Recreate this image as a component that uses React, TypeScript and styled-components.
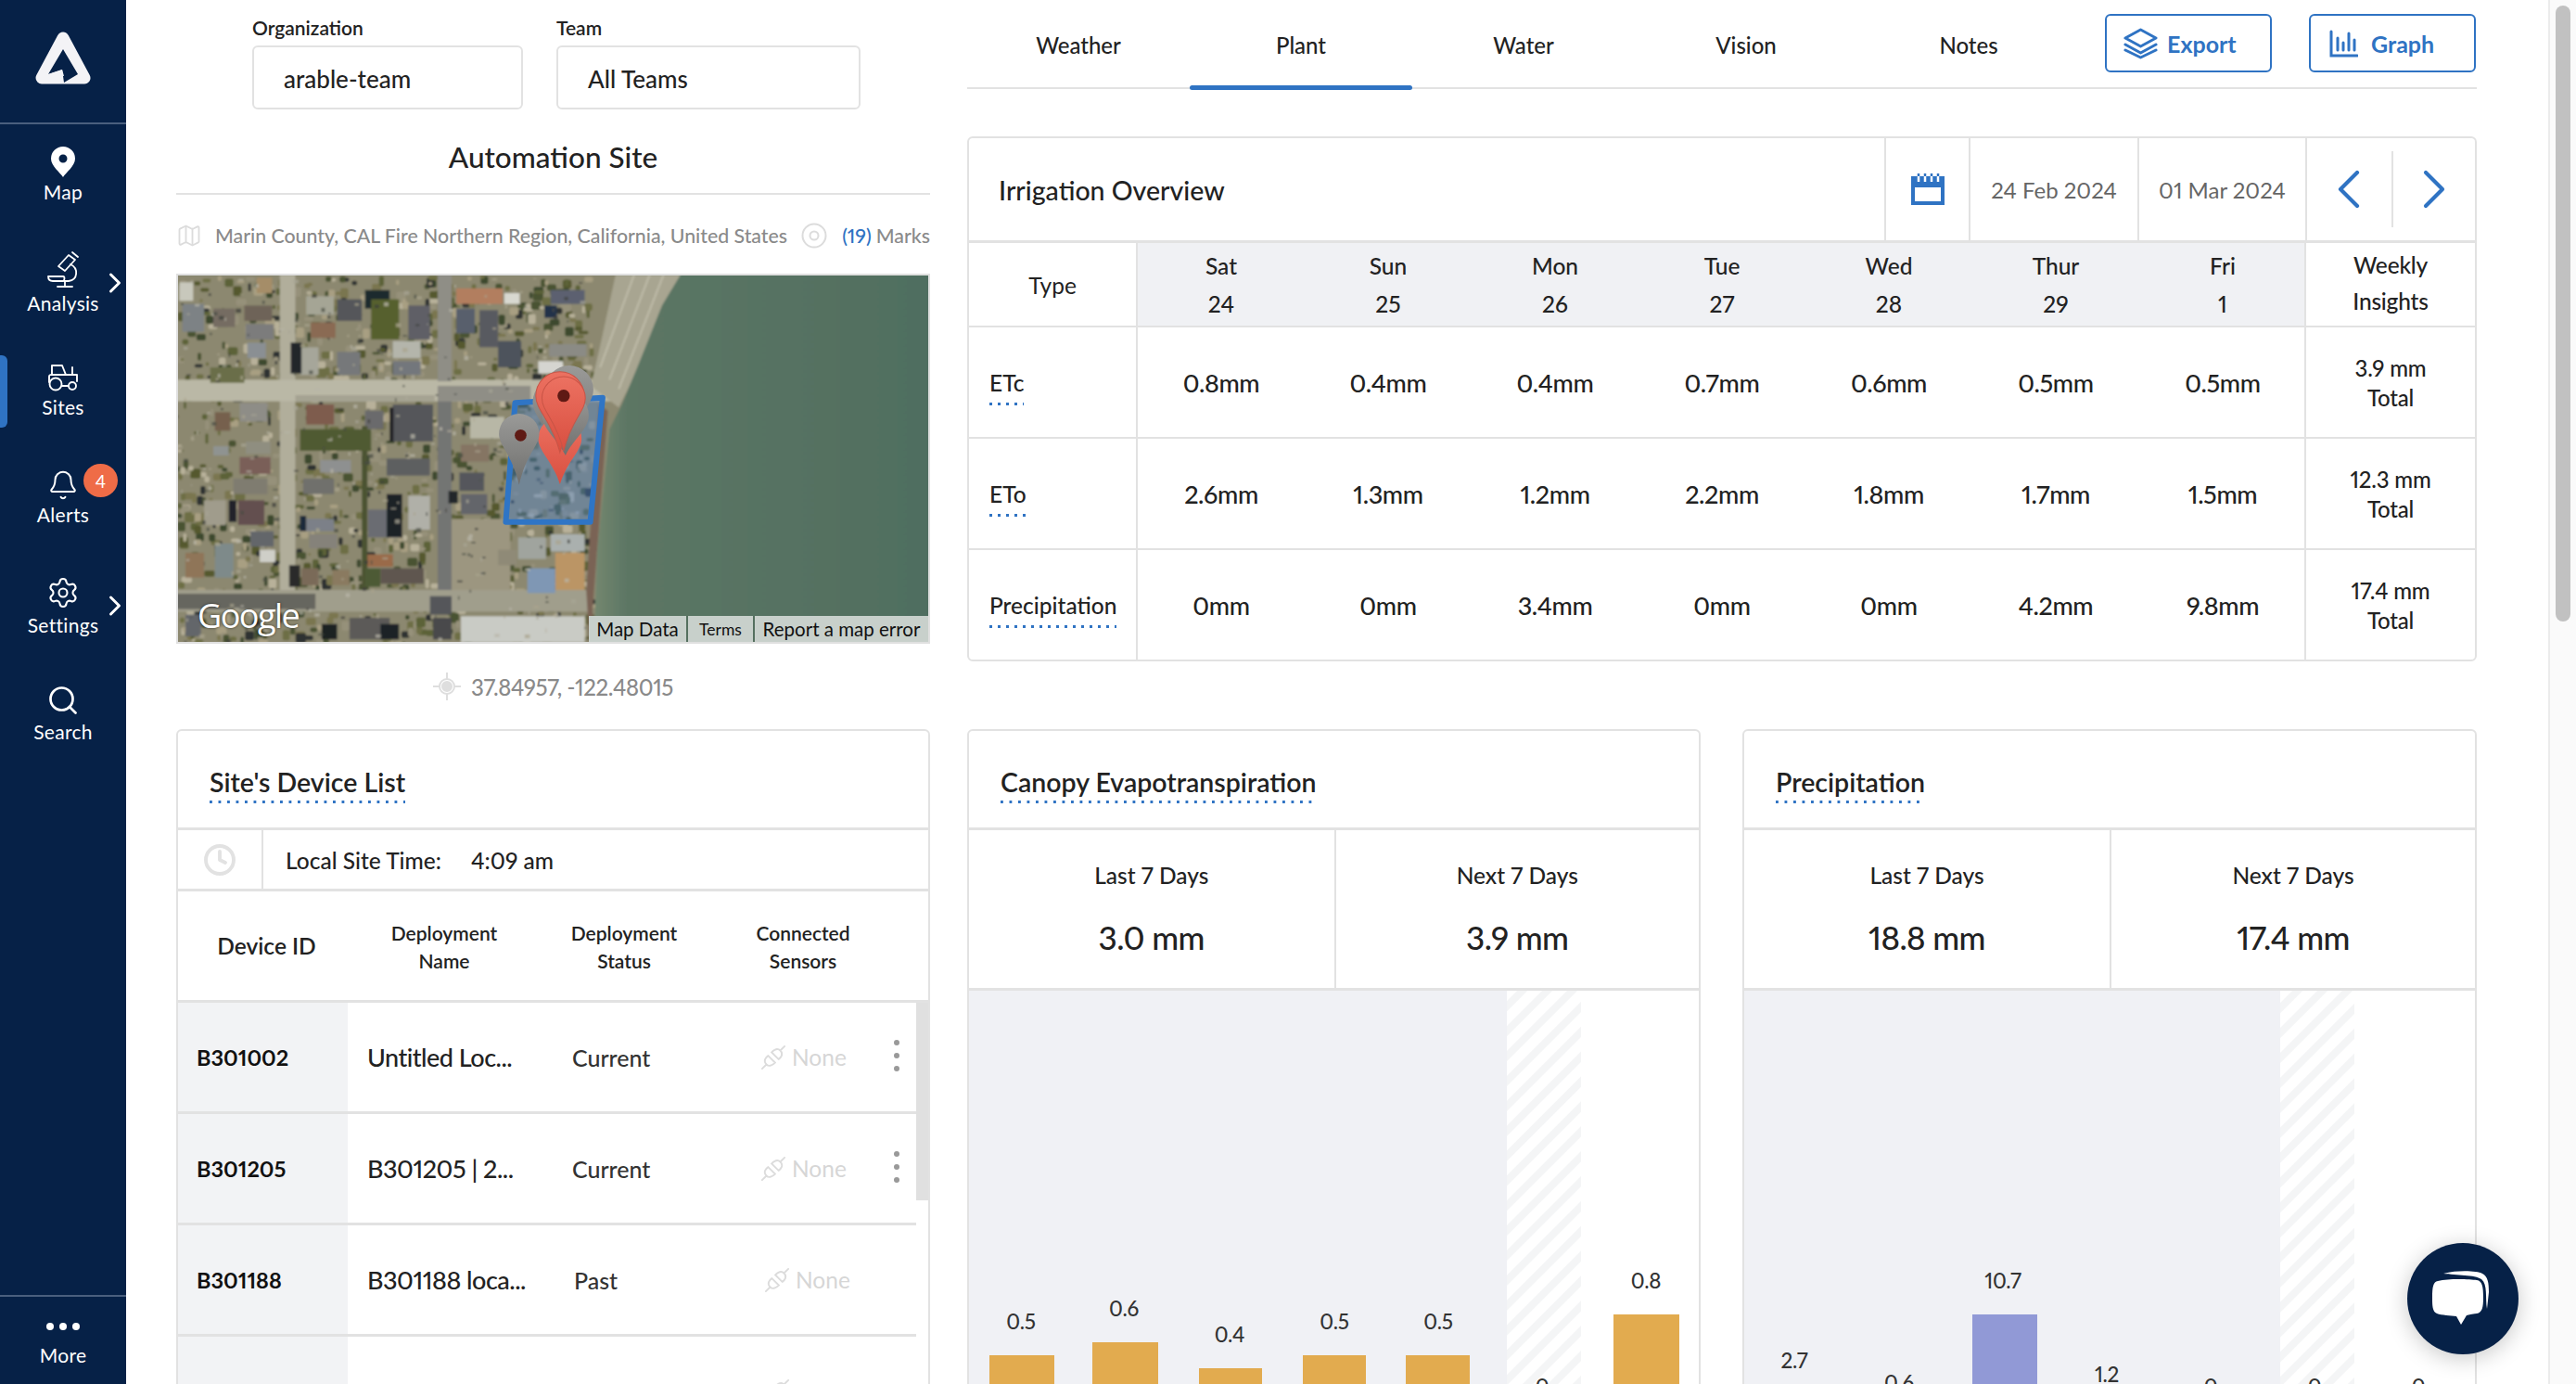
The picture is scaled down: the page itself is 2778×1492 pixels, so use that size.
import React from "react";
import styled, { createGlobalStyle } from "styled-components";
import { Bell, Settings, Search, Clock, ChevronRight, ChevronLeft, Map as MapIcon } from "lucide-react";

const BLUE = "#2f73c3";
const NAVY = "#062147";
const LINE = "#e2e2e2";

const Global = createGlobalStyle`
  html, body { margin: 0; padding: 0; width: 2778px; height: 1492px; overflow: hidden; background: #fff; }
  body, button { font-family: Lato, "Open Sans", sans-serif; color: #222; font-variant-numeric: proportional-nums; }
  * { box-sizing: border-box; }
`;

const Page = styled.div`
  position: relative; display: flex; width: 2778px; height: 1492px; overflow: hidden; background: #fff;
`;

/* ---------- sidebar ---------- */
const Side = styled.aside`
  width: 136px; flex: none; height: 100%; background: ${NAVY}; color: #fff; display: flex; flex-direction: column;
`;
const LogoBox = styled.div`
  height: 134px; flex: none; display: flex; align-items: center; justify-content: center;
  border-bottom: 2px solid #4a5f7e; padding-bottom: 6px;
`;
const NavList = styled.nav`
  flex: 1; padding-top: 22px; display: flex; flex-direction: column;
`;
const NavItem = styled.div<{ $active?: boolean }>`
  position: relative; height: 116px; flex: none; display: flex; flex-direction: column; align-items: center;
  ${(p) => p.$active && `&::before { content: ""; position: absolute; left: 0; top: -5px; width: 8px; height: 78px; background: ${BLUE}; border-radius: 0 6px 6px 0; }`}
`;
const NavIcon = styled.div<{ $gap?: number }>`
  height: 38px; display: flex; align-items: center; justify-content: center; margin-bottom: ${(p) => p.$gap ?? 2}px;
`;
const NavLabel = styled.div`
  font-size: 21px; line-height: 24px; color: #fff; letter-spacing: .3px;
`;
const NavChevron = styled.div`
  position: absolute; right: -6px; top: 15px; display: flex;
`;
const Badge = styled.div`
  position: absolute; left: 90px; top: -4px; width: 37px; height: 36px; border-radius: 50%; background: #ef6c47;
  color: #fff; font-size: 19px; display: flex; align-items: center; justify-content: center;
`;
const MoreBox = styled.div`
  height: 96px; flex: none; border-top: 2px solid #4a5f7e; display: flex; flex-direction: column; align-items: center; padding-top: 28px; gap: 15px;
`;
const Dots = styled.div`
  display: flex; gap: 6px;
`;
const Dot = styled.span`
  width: 8px; height: 8px; border-radius: 50%; background: #fff;
`;

/* ---------- main ---------- */
const Main = styled.main`
  flex: 1; padding-left: 54px; display: grid; grid-template-columns: 813px 1628px; column-gap: 40px; grid-template-rows: 786px 1fr; overflow: hidden; min-width: 0;
`;
const Track = styled.div`
  width: 30px; flex: none; background: #fafafa; border-left: 2px solid #ececec; padding: 6px 6px 0 6px;
`;
const Thumb = styled.div`
  width: 16px; height: 664px; background: #c1c1c1; border-radius: 8px;
`;

/* ---------- left top ---------- */
const TopLeft = styled.section`
  display: flex; flex-direction: column;
`;
const Filters = styled.div`
  height: 118px; padding: 20px 0 0 82px; display: flex; gap: 36px;
`;
const Filter = styled.div<{ $w: number }>`
  width: ${(p) => p.$w}px; display: flex; flex-direction: column;
`;
const FilterLabel = styled.label`
  font-size: 21px; font-weight: 600; line-height: 20px; height: 29px; color: #222;
`;
const FilterBox = styled.div`
  height: 70px; border: 2px solid ${LINE}; border-radius: 6px; padding: 4px 0 0 32px; display: flex; align-items: center; font-size: 26px; font-weight: 500; color: #222;
`;
const SiteTitle = styled.h1`
  margin: 0; height: 92px; border-bottom: 2px solid ${LINE}; font-size: 31.5px; font-weight: 500; display: flex; align-items: center; justify-content: center; padding-top: 12px; color: #222;
`;
const Address = styled.div`
  height: 85px; display: flex; align-items: center; font-size: 21.3px; color: #8a8a8a; font-weight: 500; white-space: nowrap; padding-top: 2px;
`;
const AddressText = styled.span`
  margin-left: 14px; flex: 1;
`;
const MarkBlue = styled.span`
  color: ${BLUE}; margin: 0 5px 0 16px;
`;
const MapFrame = styled.div`
  position: relative; height: 399px; border: 2px solid #e0e0e0; overflow: hidden; background: #55705f;
`;
const MapSvg = styled.svg`
  display: block; width: 100%; height: 100%;
`;
const GoogleMark = styled.div`
  position: absolute; left: 21px; bottom: 6px; font-family: "Open Sans", sans-serif; font-size: 36px; line-height: 44px; color: #fff; letter-spacing: -1.5px; text-shadow: 0 0 3px rgba(0,0,0,.6);
`;
const Attribution = styled.div`
  position: absolute; right: 0; bottom: 0; height: 28px; display: flex; gap: 2px; background: #55705f;
`;
const AttrItem = styled.div<{ $w: number; $small?: boolean }>`
  width: ${(p) => p.$w}px; background: #c8d0cb; color: #111; font-size: ${(p) => (p.$small ? 17.5 : 20.5)}px; display: flex; align-items: center; justify-content: center; white-space: nowrap;
`;
const Coords = styled.div`
  height: 92px; display: flex; align-items: center; justify-content: center; gap: 11px; font-size: 24px; font-weight: 500; color: #8a8a8a; letter-spacing: -.4px;
`;

/* ---------- right top ---------- */
const TopRight = styled.section`
  display: flex; flex-direction: column;
`;
const TabBar = styled.div`
  height: 96px; border-bottom: 2px solid ${LINE}; display: flex; align-items: flex-start;
`;
const Tab = styled.div<{ $active?: boolean }>`
  position: relative; width: 240px; height: 94px; display: flex; align-items: center; justify-content: center; font-size: 24px; color: #222; font-weight: 500; padding-top: 2px;
  ${(p) => p.$active && `&::after { content: ""; position: absolute; left: 0; right: 0; bottom: -3px; height: 5px; background: ${BLUE}; border-radius: 3px; }`}
`;
const BarButton = styled.button<{ $ml: number; $pl: number; $gap: number }>`
  margin: 15px 0 0 ${(p) => p.$ml}px; width: 180px; height: 63px; border: 2px solid ${BLUE}; border-radius: 6px; background: #fff; color: ${BLUE}; font-size: 25px; font-weight: 700; display: flex; align-items: center; gap: ${(p) => p.$gap}px; padding: 0 0 0 ${(p) => p.$pl}px;
`;
const Card = styled.div`
  border: 2px solid ${LINE}; border-radius: 6px 6px 0 0; background: #fff; overflow: hidden;
`;
const IrrigationCard = styled(Card)`
  margin-top: 51px; height: 566px; border-radius: 6px;
`;
const IrrHead = styled.div`
  height: 113px; display: flex; align-items: stretch; border-bottom: 3px solid ${LINE};
`;
const IrrTitle = styled.div`
  flex: 1; padding: 2px 0 0 32px; display: flex; align-items: center; font-size: 28.5px; font-weight: 500; color: #222;
`;
const HeadCell = styled.div<{ $w: number }>`
  position: relative; width: ${(p) => p.$w}px; border-left: 2px solid ${LINE}; display: flex; align-items: center; justify-content: center; font-size: 24px; color: #666;
`;
const NavPair = styled.div`
  width: 183px; border-left: 2px solid ${LINE}; display: grid; grid-template-columns: 1fr 1fr; align-items: center;
`;
const NavBtn = styled.div<{ $sep?: boolean }>`
  height: 82px; display: flex; align-items: center; justify-content: center; overflow: visible; ${(p) => p.$sep && `border-left: 2px solid ${LINE};`}
`;
const IrrGrid = styled.div`
  display: grid; grid-template-columns: 182px repeat(7, 180px) 182px; grid-auto-rows: auto;
`;
const TypeCell = styled.div<{ $h: number }>`
  height: ${(p) => p.$h}px; border-right: 2px solid ${LINE}; border-bottom: 2px solid ${LINE}; display: flex; align-items: center; font-size: 24.5px; color: #222; padding-left: 22px;
`;
const TypeHead = styled(TypeCell)`
  justify-content: center; padding: 2px 0 0 0;
`;
const DottedLabel = styled.span`
  padding-bottom: 12px; line-height: 24px; font-weight: 500; margin-top: 13px; background: linear-gradient(to right, ${BLUE} 3px, transparent 3px) left bottom / 9px 3px repeat-x;
`;
const DayHead = styled.div`
  height: 91px; background: #f0f1f4; border-bottom: 2px solid ${LINE}; display: flex; flex-direction: column; align-items: center; justify-content: center; font-size: 24.5px; line-height: 41px; color: #222; font-weight: 500; padding-top: 1px;
`;
const Value = styled.div<{ $h: number }>`
  height: ${(p) => p.$h}px; border-bottom: 2px solid ${LINE}; display: flex; align-items: center; justify-content: center; font-size: 27px; font-weight: 500; color: #222; letter-spacing: -.4px; padding-top: 1px;
`;
const Insight = styled.div<{ $h: number; $head?: boolean }>`
  height: ${(p) => p.$h}px; border-left: 2px solid ${LINE}; border-bottom: 2px solid ${LINE}; margin-left: -2px; display: flex; flex-direction: column; align-items: center; justify-content: center; font-size: ${(p) => (p.$head ? 24.5 : 24)}px; line-height: ${(p) => (p.$head ? 39 : 32)}px; font-weight: 500; color: #222; letter-spacing: -.2px; ${(p) => (p.$head ? "padding-bottom: 4px;" : "padding-top: 2px;")}
`;

/* ---------- device card ---------- */
const DeviceCard = styled(Card)`
  height: 720px;
`;
const CardTitleBar = styled.div<{ $pl: number }>`
  height: 107px; border-bottom: 3px solid ${LINE}; padding: 38px 0 0 ${(p) => p.$pl}px; display: flex; align-items: flex-start;
`;
const CardTitle = styled.h2`
  margin: 0; font-size: 28.5px; line-height: 34px; font-weight: 600; color: #222; padding-bottom: 6px; background: linear-gradient(to right, ${BLUE} 3px, transparent 3px) left bottom / 9.5px 3px repeat-x;
`;
const TimeRow = styled.div`
  height: 66px; border-bottom: 3px solid ${LINE}; display: flex; align-items: stretch;
`;
const TimeIcon = styled.div`
  width: 92px; border-right: 2px solid ${LINE}; display: flex; align-items: center; justify-content: center;
`;
const TimeText = styled.div`
  padding: 2px 0 0 24px; display: flex; align-items: center; gap: 32px; font-size: 24.5px; color: #222; font-weight: 500;
`;
const DeviceHead = styled.div`
  height: 120px; border-bottom: 3px solid ${LINE}; display: grid; grid-template-columns: 183px 208px 180px 206px 1fr; align-items: center; text-align: center; padding-top: 2px;
`;
const DevHeadId = styled.div`
  font-size: 24.5px; font-weight: 600; color: #222; margin-bottom: 2px; padding-left: 8px;
`;
const DevHeadCol = styled.div`
  font-size: 21px; line-height: 29.5px; font-weight: 600; color: #222;
`;
const RowsWrap = styled.div`
  position: relative;
`;
const RowScroll = styled.div`
  position: absolute; right: 0; top: 0; width: 13px; height: 213px; background: #e0e0e0;
`;
const DevRow = styled.div`
  height: 120px; margin-right: 13px; border-bottom: 3px solid ${LINE}; display: flex; align-items: stretch;
`;
const DevId = styled.div`
  width: 183px; background: #f2f3f5; display: flex; align-items: center; padding-left: 20px; font-size: 23.5px; font-weight: 700; color: #111;
`;
const DevName = styled.div`
  width: 222px; padding-left: 21px; display: flex; align-items: center; font-size: 27px; font-weight: 500; color: #222; letter-spacing: -.5px; white-space: nowrap;
`;
const DevStatus = styled.div<{ $pl: number }>`
  width: 198px; padding-left: ${(p) => p.$pl}px; display: flex; align-items: center; font-size: 25px; font-weight: 500; color: #333;
`;
const DevNone = styled.div<{ $pl: number }>`
  position: relative; padding-left: ${(p) => p.$pl}px; flex: 1; display: flex; align-items: center; gap: 6px; font-size: 24.5px; color: #d6d6d6;
`;
const Kebab = styled.div`
  position: absolute; right: 18px; top: 40px; display: flex; flex-direction: column; gap: 8px;
`;
const KebabDot = styled.span`
  width: 6px; height: 6px; border-radius: 50%; background: #999;
`;

/* ---------- chart cards ---------- */
const Charts = styled.div`
  display: grid; grid-template-columns: 791px 792px; column-gap: 45px;
`;
const ChartCard = styled(Card)`
  height: 720px;
`;
const Stats = styled.div`
  height: 173px; border-bottom: 3px solid ${LINE}; display: grid; grid-template-columns: 1fr 1fr;
`;
const Stat = styled.div<{ $sep?: boolean }>`
  ${(p) => p.$sep && `border-left: 2px solid ${LINE};`} display: flex; flex-direction: column; align-items: center; padding-top: 34px; gap: 30px;
`;
const StatLabel = styled.div`
  font-size: 24.5px; line-height: 30px; color: #222; font-weight: 500;
`;
const StatValue = styled.div`
  font-size: 35px; line-height: 42px; color: #222; font-weight: 500; letter-spacing: -.6px;
`;
const PlotSvg = styled.svg`
  display: block; width: 100%; height: 440px;
`;
const ChartLabel = styled.text`
  font-family: Lato, sans-serif; font-size: 22.5px; font-weight: 500; fill: #333; text-anchor: middle; letter-spacing: -.3px;
`;

const Chat = styled.div`
  position: absolute; right: 62px; bottom: 32px; width: 120px; height: 120px; border-radius: 50%; background: ${NAVY}; box-shadow: 0 4px 24px rgba(0,0,0,.22); display: flex; align-items: center; justify-content: center;
`;

/* ---------- drawings ---------- */
const Logo = () => (
  <svg width="60" height="58" viewBox="0 0 60 58">
    <path d="M30 7 L53 50 L7 50 Z" fill="#f3f3f6" stroke="#f3f3f6" strokeWidth="13" strokeLinejoin="round" />
    <path d="M30 19 L14 46 L29 41 L31 55 L46 46 Z" fill={NAVY} />
    <path d="M29 41 L14 46 L31 48 Z" fill="#f3f3f6" />
  </svg>
);
const PinIcon = () => (
  <svg width="28" height="34" viewBox="0 0 28 34">
    <path fillRule="evenodd" d="M14 33 C11 28 1 21 1 13 A13 13 0 0 1 27 13 C27 21 17 28 14 33 Z M14 8.5 A4.5 4.5 0 1 0 14 17.5 A4.5 4.5 0 1 0 14 8.5 Z" fill="#fff" />
  </svg>
);
const ScopeIcon = () => (
  <svg width="40" height="40" viewBox="0 0 40 40" fill="none" stroke="#fff" strokeWidth="1.8" strokeLinejoin="round" strokeLinecap="round">
    <path d="M26 4 L33 9 L22 21 L15 16 Z" />
    <path d="M30 1 L36 6" />
    <path d="M28 14 C37 18 36 31 26 32 H21" />
    <path d="M4 27 H20 C22 27 22 31 20 32 H9 C6 32 4 30 4 27 Z" />
    <path d="M22 32 V38 M14 38 H30" />
  </svg>
);
const TractorIcon = () => (
  <svg width="36" height="32" viewBox="0 0 36 32" fill="none" stroke="#fff" strokeWidth="1.9" strokeLinejoin="round" strokeLinecap="round">
    <path d="M6 12 V3 H17 L21 13" />
    <path d="M21 13 H33 V20 M28 13 V5" />
    <path d="M3 21 V15 C3 13 4 13 6 13 H21" />
    <circle cx="10" cy="23" r="6.5" />
    <circle cx="28" cy="25" r="4" />
    <path d="M17 25 H24" />
  </svg>
);
const LayersIcon = () => (
  <svg width="37" height="34" viewBox="0 0 37 34" fill="none" stroke={BLUE} strokeWidth="3" strokeLinejoin="round" strokeLinecap="round">
    <path d="M18.5 2 L35 11 L18.5 20 L2 11 Z" />
    <path d="M2 18 L18.5 27 L35 18" />
    <path d="M2 24 L18.5 32 L35 24" />
  </svg>
);
const GraphIcon = () => (
  <svg width="31" height="30" viewBox="0 0 31 30" fill="none" stroke={BLUE} strokeWidth="3" strokeLinecap="round">
    <path d="M2 2 V28 H30" />
    <path d="M9 9 V22 M15 14 V22 M21 4 V22 M27 11 V22" />
  </svg>
);
const CalendarIcon = () => (
  <svg width="40" height="34" viewBox="0 0 40 34">
    <path fillRule="evenodd" fill={BLUE} d="M2 3 H38 V34 H2 Z M6 15 V30 H34 V15 Z" />
    <path d="M10 0 V9 M17 0 V9 M24 0 V9 M31 0 V9" stroke="#fff" strokeWidth="2.5" />
    <path d="M10 0 V3 M17 0 V3 M24 0 V3 M31 0 V3" stroke={BLUE} strokeWidth="2.5" />
  </svg>
);
const PlugIcon = () => (
  <svg width="28" height="28" viewBox="0 0 30 30" fill="none" stroke="#dcdcdc" strokeWidth="2" strokeLinecap="round">
    <path d="M2 28 L7 23 M28 2 L23 7 M7 23 C3 19 6 15 9 13 L17 21 C14 24 10 26 7 23 Z M23 7 C27 11 24 15 21 17 L13 9 C16 6 20 4 23 7 Z" />
  </svg>
);
const RingIcon = () => (
  <svg width="28" height="28" viewBox="0 0 28 28" fill="none" stroke="#dcdcdc" strokeWidth="2">
    <circle cx="14" cy="14" r="12.5" />
    <circle cx="14" cy="14" r="4.5" />
  </svg>
);
const Crosshair = () => (
  <svg width="30" height="30" viewBox="0 0 30 30" fill="none" stroke="#dedede" strokeWidth="2">
    <circle cx="15" cy="15" r="8" />
    <circle cx="15" cy="15" r="5" fill="#dedede" />
    <path d="M15 0 V7 M15 23 V30 M0 15 H7 M23 15 H30" />
  </svg>
);
const ChatIcon = () => (
  <svg width="70" height="62" viewBox="0 0 70 62">
    <path d="M14 4 C30 0 50 1 56 4 C62 7 63 14 63 24 L61 42 C59 30 62 16 55 10 C48 5 28 6 14 4 Z" fill="#fff" />
    <path d="M8 12 C20 9 42 10 50 11 C56 12 57 18 57 30 C57 40 56 46 50 47 C44 48 42 48 39 49 L33 59 L28 50 C22 49 12 49 7 47 C2 45 2 38 2 30 C2 18 3 13 8 12 Z" fill="#fff" />
  </svg>
);

/* satellite picture: roofs and trees in the reference's own pixel grid (3 units per px) */
type R = [number, number, number, number, string];
const roofs: R[] = [
  [20,95,70,90,"#7d8285"],[120,110,70,60,"#756c62"],[220,100,90,50,"#6e6458"],[225,160,90,50,"#7b7c7c"],[230,220,60,50,"#8a8f93"],
  [420,70,90,60,"#a5a595"],[520,80,80,70,"#55565a"],[435,155,80,50,"#8a6a52"],[400,235,60,90,"#a6a69a"],[520,250,75,75,"#76787a"],
  [700,215,90,55,"#b4b5ab"],[700,280,90,45,"#73777c"],[750,100,70,110,"#5e5f66"],[905,110,60,80,"#585f6c"],[980,115,60,120,"#585a60"],
  [1040,215,75,85,"#4d535c"],[1170,280,80,40,"#d5d5d0"],[1205,225,120,40,"#8b8b85"],[905,45,150,50,"#b27e5f"],[1060,60,50,35,"#d8d8d0"],
  [1210,50,110,45,"#5c6170"],[10,25,45,60,"#c8c8bc"],[260,10,50,50,"#a58d68"],[420,420,90,65,"#7e5c4e"],[610,440,60,60,"#6b6a6c"],
  [700,420,130,120,"#55565a"],[205,415,90,60,"#8e8d87"],[125,445,50,60,"#76604d"],[950,460,110,70,"#b8b7a6"],[920,550,90,55,"#857463"],
  [915,640,80,60,"#54575c"],[920,710,85,65,"#63656a"],[465,600,100,40,"#8e9090"],[680,595,140,55,"#5d5e60"],[185,660,110,50,"#7f7b70"],
  [410,660,100,50,"#70706c"],[205,590,100,55,"#7a5f58"],[120,555,50,30,"#8f9391"],[225,540,80,40,"#8f8e80"],[90,730,70,80,"#a09c8c"],
  [200,730,85,80,"#64504f"],[420,790,90,40,"#7b8088"],[430,840,90,45,"#85827a"],[620,760,100,90,"#6a6c72"],[750,715,70,110,"#b0b0a8"],
  [125,870,60,110,"#7e8a8a"],[240,830,75,50,"#64666a"],[270,890,50,40,"#cfcfc8"],[30,900,60,80,"#8f7458"],[405,950,55,55,"#7a6a58"],
  [505,955,55,50,"#8a7a60"],[660,950,140,50,"#5f574f"],[610,905,90,40,"#9a6a4a"],[1105,850,90,70,"#a0a49e"],[1210,840,110,55,"#aab0ae"],
  [1225,900,95,120,"#bb9565"],[1135,950,90,80,"#7f97b4"],[1040,890,60,50,"#8f8a77"],[920,1105,400,85,"#c9cbc5"],[560,1110,130,70,"#5b5a58"],
  [30,1100,50,70,"#64666a"],[370,220,35,100,"#23272a"],[610,50,80,60,"#1e2a2e"],[680,710,50,140,"#1f2328"],[690,430,12,110,"#1d1f22"],
  [365,940,35,70,"#2a2a2a"],[400,780,20,50,"#1f2a3a"],[170,730,25,70,"#20242a"],[880,700,30,40,"#232629"],[1190,100,40,40,"#24304a"],
  [660,1130,60,50,"#1f2428"],[830,1110,60,70,"#4a4a4c"],[470,1130,50,50,"#1d2124"],
  [600,490,18,520,"#4c5230"],[400,500,230,70,"#4f5a33"],[110,300,110,50,"#6a6e48"],[630,80,90,130,"#57602f"],[610,950,50,60,"#4e5a36"],
];
const tints = ["#4a5233","#5c6238","#6d6e44","#3e4a2e","#7a7650","#54592f","#a89f82","#b8b19a","#2f3330","#96917a"];
const Pin = ({ cx, cy, r, tip, fill, stroke }: { cx: number; cy: number; r: number; tip: number; fill: string; stroke?: string }) => (
  <path
    d={`M${cx} ${tip} C${cx - r * 0.35} ${cy + r * 1.0} ${cx - r} ${cy + r * 0.6} ${cx - r} ${cy} A${r} ${r} 0 0 1 ${cx + r} ${cy} C${cx + r} ${cy + r * 0.6} ${cx + r * 0.35} ${cy + r * 1.0} ${cx} ${tip} Z`}
    fill={fill}
    stroke={stroke}
    strokeWidth={stroke ? 3 : 0}
  />
);
const scatter = (() => {
  const out: { x: number; y: number; w: number; h: number; c: string }[] = [];
  let s = 12345;
  const rnd = () => ((s = (s * 1103515245 + 12345) & 0x7fffffff) / 0x7fffffff);
  for (let i = 0; i < 1300; i++) {
    out.push({ x: rnd() * 1340, y: rnd() * 1190, w: 8 + rnd() * 26, h: 8 + rnd() * 26, c: tints[Math.floor(rnd() * tints.length)] });
  }
  return out;
})();
const specks = (() => {
  const out: { x: number; y: number; w: number; h: number; c: string }[] = [];
  let s = 777;
  const rnd = () => ((s = (s * 1103515245 + 12345) & 0x7fffffff) / 0x7fffffff);
  const c = ["#b8b6a8", "#3c3e3a", "#a8a696", "#4a4e44", "#a9a48e"];
  for (let i = 0; i < 320; i++) {
    out.push({ x: rnd() * 1330, y: rnd() * 1190, w: 4 + rnd() * 14, h: 4 + rnd() * 10, c: c[Math.floor(rnd() * c.length)] });
  }
  return out;
})();
const Satellite = () => (
  <MapSvg viewBox="6 3 2424 1185" preserveAspectRatio="none">
    <defs>
      <filter id="soft" x="-2%" y="-2%" width="104%" height="104%"><feGaussianBlur stdDeviation="3.6" /></filter>
      <linearGradient id="sea" x1="0" x2="1" y1="0" y2="0">
        <stop offset="0" stopColor="#74876f" />
        <stop offset=".1" stopColor="#5c7664" />
        <stop offset=".6" stopColor="#567262" />
        <stop offset="1" stopColor="#4f6e60" />
      </linearGradient>
      <linearGradient id="redPin" x1="0" x2="0" y1="0" y2="1">
        <stop offset="0" stopColor="#ec7161" />
        <stop offset="1" stopColor="#d94f40" />
      </linearGradient>
      <linearGradient id="grayPin" x1="0" x2="0" y1="0" y2="1">
        <stop offset="0" stopColor="#9a9a98" />
        <stop offset="1" stopColor="#6f6f6d" />
      </linearGradient>
    </defs>
    <g filter="url(#soft)">
      <rect x="0" y="0" width="2436" height="1200" fill="#8c8870" />
      {scatter.map((t, i) => <rect key={i} x={t.x} y={t.y} width={t.w} height={t.h} rx="6" fill={t.c} />)}
      <rect x="335" y="0" width="50" height="1040" fill="#b1ae9b" />
      <rect x="0" y="340" width="1420" height="70" fill="#bab8a6" />
      <rect x="845" y="360" width="300" height="50" fill="#8f8e86" />
      <rect x="845" y="0" width="45" height="345" fill="#8f8e86" />
      <rect x="845" y="410" width="45" height="610" fill="#737473" />
      <rect x="0" y="1020" width="1340" height="70" fill="#a09e8c" />
      <rect x="0" y="1032" width="450" height="50" fill="#66665f" />
      <rect x="820" y="1040" width="70" height="60" fill="#55565a" />
      <rect x="385" y="390" width="450" height="20" fill="#a5a392" />
      <rect x="890" y="790" width="190" height="230" fill="#9c9680" />
      {roofs.map(([x, y, w, h, c], i) => <rect key={i} x={x} y={y} width={w} height={h} fill={c} />)}
      {specks.map((t, i) => <rect key={i} x={t.x} y={t.y} width={t.w} height={t.h} fill={t.c} opacity=".75" />)}
      <path d="M1420 0 L1640 0 L1480 330 L1430 430 L1340 360 L1370 230 Z" fill="#a8a591" />
      <path d="M1480 0 L1370 300 M1530 0 L1400 340 M1575 0 L1430 370" stroke="#bfbca9" strokeWidth="6" fill="none" />
      <path d="M1395 440 L1345 1090 L1360 1190 L1335 1190 L1325 1020 L1365 420 Z" fill="#7a6355" />
      <path d="M1630 0 L1570 100 L1530 200 L1490 300 L1440 420 L1400 500 L1380 700 L1360 900 L1350 1190 L2440 1190 L2440 0 Z" fill="url(#sea)" />
    </g>
    <path d="M1095 415 L1378 398 L1338 800 L1065 800 Z" fill="rgba(70,130,210,.38)" stroke="#2f75c5" strokeWidth="18" strokeLinejoin="round" />
    <Pin cx={1228} cy={412} r={76} tip={585} fill="url(#grayPin)" />
    <Pin cx={1270} cy={372} r={78} tip={578} fill="url(#grayPin)" />
    <Pin cx={1240} cy={530} r={70} tip={678} fill="url(#redPin)" />
    <Pin cx={1258} cy={455} r={75} tip={585} fill="url(#grayPin)" />
    <Pin cx={1108} cy={515} r={65} tip={680} fill="url(#grayPin)" />
    <circle cx="1113" cy="520" r="19" fill="#5f1a14" />
    <Pin cx={1240} cy={392} r={78} tip={575} fill="url(#redPin)" stroke="#c85446" />
    <Pin cx={1252} cy={400} r={70} tip={570} fill="url(#redPin)" stroke="#c85446" />
    <circle cx="1252" cy="392" r="20" fill="#5f1a14" />
  </MapSvg>
);

type Bar = { x: number; w: number; top?: number; label: string; ly: number; lx: number };
const ORIGIN = 1068;
const plotA: Bar[] = [
  { x: 1067, w: 70, top: 1461, label: "0.5", ly: 1425, lx: 1101 },
  { x: 1178, w: 71, top: 1447, label: "0.6", ly: 1411, lx: 1212 },
  { x: 1293, w: 68, top: 1475, label: "0.4", ly: 1439, lx: 1326 },
  { x: 1405, w: 68, top: 1461, label: "0.5", ly: 1425, lx: 1439 },
  { x: 1516, w: 69, top: 1461, label: "0.5", ly: 1425, lx: 1551 },
  { x: 0, w: 0, label: "0", ly: 1495, lx: 1663 },
  { x: 1740, w: 71, top: 1417, label: "0.8", ly: 1381, lx: 1775 },
];
const plotB: Bar[] = [
  { x: 0, w: 0, label: "2.7", ly: 1467, lx: 1935 },
  { x: 0, w: 0, label: "0.6", ly: 1491, lx: 2048 },
  { x: 2127, w: 70, top: 1417, label: "10.7", ly: 1381, lx: 2160 },
  { x: 0, w: 0, label: "1.2", ly: 1482, lx: 2272 },
  { x: 0, w: 0, label: "0", ly: 1495, lx: 2384 },
  { x: 0, w: 0, label: "0", ly: 1495, lx: 2496 },
  { x: 0, w: 0, label: "0", ly: 1495, lx: 2608 },
];
const Plot = ({ id, bars, originX, greyW, color }: { id: string; bars: Bar[]; originX: number; greyW: number; color: string }) => (
  <PlotSvg viewBox="0 0 788 440" preserveAspectRatio="xMinYMin slice">
    <defs>
      <pattern id={id} width="19" height="19" patternUnits="userSpaceOnUse" patternTransform="rotate(45)">
        <rect width="8" height="19" fill="#f4f5f6" />
      </pattern>
    </defs>
    <rect x="0" y="0" width={greyW} height="440" fill="#f0f1f5" />
    <rect x={greyW} y="0" width="80" height="440" fill={`url(#${id})`} />
    {bars.map((b, i) => (
      <g key={i}>
        {b.top !== undefined && <rect x={b.x - originX} y={b.top - ORIGIN} width={b.w} height={100} fill={color} />}
        <ChartLabel x={b.lx - originX} y={b.ly - ORIGIN + 8}>{b.label}</ChartLabel>
      </g>
    ))}
  </PlotSvg>
);

const days = [["Sat","24"],["Sun","25"],["Mon","26"],["Tue","27"],["Wed","28"],["Thur","29"],["Fri","1"]];
const rows = [
  { t: "ETc", h: 120, v: ["0.8mm","0.4mm","0.4mm","0.7mm","0.6mm","0.5mm","0.5mm"], w: "3.9 mm" },
  { t: "ETo", h: 120, v: ["2.6mm","1.3mm","1.2mm","2.2mm","1.8mm","1.7mm","1.5mm"], w: "12.3 mm" },
  { t: "Precipitation", h: 120, v: ["0mm","0mm","3.4mm","0mm","0mm","4.2mm","9.8mm"], w: "17.4 mm" },
];
const devices = [
  { key: "a", id: "B301002", name: "Untitled Loc...", status: "Current", pl: 20, npl: 25, kebab: true, none: "None" },
  { key: "b", id: "B301205", name: "B301205 | 2...", status: "Current", pl: 20, npl: 25, kebab: true, none: "None" },
  { key: "c", id: "B301188", name: "B301188 loca...", status: "Past", pl: 22, npl: 29, kebab: false, none: "None" },
  { key: "d", id: "", name: "", status: "", pl: 22, npl: 29, kebab: false, none: "" },
];

export default function App() {
  return (
    <Page>
      <Global />
      <Side>
        <LogoBox><Logo /></LogoBox>
        <NavList>
          <NavItem><NavIcon $gap={1}><PinIcon /></NavIcon><NavLabel>Map</NavLabel></NavItem>
          <NavItem>
            <NavIcon $gap={5}><ScopeIcon /></NavIcon><NavLabel>Analysis</NavLabel>
            <NavChevron><ChevronRight size={36} strokeWidth={2} /></NavChevron>
          </NavItem>
          <NavItem $active><NavIcon $gap={1}><TractorIcon /></NavIcon><NavLabel>Sites</NavLabel></NavItem>
          <NavItem>
            <NavIcon $gap={1}><Bell size={34} strokeWidth={1.4} /></NavIcon><NavLabel>Alerts</NavLabel>
            <Badge>4</Badge>
          </NavItem>
          <NavItem>
            <NavIcon $gap={4}><Settings size={36} strokeWidth={1.4} /></NavIcon><NavLabel>Settings</NavLabel>
            <NavChevron><ChevronRight size={36} strokeWidth={2} /></NavChevron>
          </NavItem>
          <NavItem><NavIcon $gap={3}><Search size={36} strokeWidth={1.8} /></NavIcon><NavLabel>Search</NavLabel></NavItem>
        </NavList>
        <MoreBox>
          <Dots><Dot /><Dot /><Dot /></Dots>
          <NavLabel>More</NavLabel>
        </MoreBox>
      </Side>

      <Main>
        <TopLeft>
          <Filters>
            <Filter $w={292}><FilterLabel>Organization</FilterLabel><FilterBox>arable-team</FilterBox></Filter>
            <Filter $w={328}><FilterLabel>Team</FilterLabel><FilterBox>All Teams</FilterBox></Filter>
          </Filters>
          <SiteTitle>Automation Site</SiteTitle>
          <Address>
            <MapIcon size={28} strokeWidth={1.6} color="#dcdcdc" />
            <AddressText>Marin County, CAL Fire Northern Region, California, United States</AddressText>
            <RingIcon />
            <MarkBlue>(19)</MarkBlue>Marks
          </Address>
          <MapFrame>
            <Satellite />
            <GoogleMark>Google</GoogleMark>
            <Attribution>
              <AttrItem $w={105}>Map Data</AttrItem>
              <AttrItem $w={70} $small>Terms</AttrItem>
              <AttrItem $w={187}>Report a map error</AttrItem>
            </Attribution>
          </MapFrame>
          <Coords><Crosshair />37.84957, -122.48015</Coords>
        </TopLeft>

        <TopRight>
          <TabBar>
            <Tab>Weather</Tab>
            <Tab $active>Plant</Tab>
            <Tab>Water</Tab>
            <Tab>Vision</Tab>
            <Tab>Notes</Tab>
            <BarButton $ml={27} $pl={18} $gap={10}><LayersIcon />Export</BarButton>
            <BarButton $ml={40} $pl={20} $gap={14}><GraphIcon />Graph</BarButton>
          </TabBar>
          <IrrigationCard>
            <IrrHead>
              <IrrTitle>Irrigation Overview</IrrTitle>
              <HeadCell $w={91}><CalendarIcon /></HeadCell>
              <HeadCell $w={182}>24 Feb 2024</HeadCell>
              <HeadCell $w={181}>01 Mar 2024</HeadCell>
              <NavPair>
                <NavBtn><ChevronLeft size={72} strokeWidth={1.4} color={BLUE} /></NavBtn>
                <NavBtn $sep><ChevronRight size={72} strokeWidth={1.4} color={BLUE} /></NavBtn>
              </NavPair>
            </IrrHead>
            <IrrGrid>
              <TypeHead $h={91}>Type</TypeHead>
              {days.map(([d, n]) => <DayHead key={d}><span>{d}</span><span>{n}</span></DayHead>)}
              <Insight $h={91} $head><span>Weekly</span><span>Insights</span></Insight>
              {rows.map((r) => (
                <React.Fragment key={r.t}>
                  <TypeCell $h={r.h}><DottedLabel>{r.t}</DottedLabel></TypeCell>
                  {r.v.map((v, i) => <Value key={i} $h={r.h}>{v}</Value>)}
                  <Insight $h={r.h}><span>{r.w}</span><span>Total</span></Insight>
                </React.Fragment>
              ))}
            </IrrGrid>
          </IrrigationCard>
        </TopRight>

        <DeviceCard>
          <CardTitleBar $pl={34}><CardTitle>Site's Device List</CardTitle></CardTitleBar>
          <TimeRow>
            <TimeIcon><Clock size={36} strokeWidth={2.6} color="#e2e2e2" /></TimeIcon>
            <TimeText><span>Local Site Time:</span><span>4:09 am</span></TimeText>
          </TimeRow>
          <DeviceHead>
            <DevHeadId>Device ID</DevHeadId>
            <DevHeadCol>Deployment<br />Name</DevHeadCol>
            <DevHeadCol>Deployment<br />Status</DevHeadCol>
            <DevHeadCol>Connected<br />Sensors</DevHeadCol>
          </DeviceHead>
          <RowsWrap>
            <RowScroll />
            {devices.map((d) => (
              <DevRow key={d.key}>
                <DevId>{d.id}</DevId>
                <DevName>{d.name}</DevName>
                <DevStatus $pl={d.pl}>{d.status}</DevStatus>
                <DevNone $pl={d.npl}>
                  <PlugIcon />{d.none}
                  {d.kebab && <Kebab><KebabDot /><KebabDot /><KebabDot /></Kebab>}
                </DevNone>
              </DevRow>
            ))}
          </RowsWrap>
        </DeviceCard>

        <Charts>
          <ChartCard>
            <CardTitleBar $pl={34}><CardTitle>Canopy Evapotranspiration</CardTitle></CardTitleBar>
            <Stats>
              <Stat><StatLabel>Last 7 Days</StatLabel><StatValue>3.0 mm</StatValue></Stat>
              <Stat $sep><StatLabel>Next 7 Days</StatLabel><StatValue>3.9 mm</StatValue></Stat>
            </Stats>
            <Plot id="hatchA" bars={plotA} originX={1045} greyW={580} color="#e2ab4f" />
          </ChartCard>
          <ChartCard>
            <CardTitleBar $pl={34}><CardTitle>Precipitation</CardTitle></CardTitleBar>
            <Stats>
              <Stat><StatLabel>Last 7 Days</StatLabel><StatValue>18.8 mm</StatValue></Stat>
              <Stat $sep><StatLabel>Next 7 Days</StatLabel><StatValue>17.4 mm</StatValue></Stat>
            </Stats>
            <Plot id="hatchB" bars={plotB} originX={1881} greyW={578} color="#9199d6" />
          </ChartCard>
        </Charts>
      </Main>

      <Track><Thumb /></Track>
      <Chat><ChatIcon /></Chat>
    </Page>
  );
}
